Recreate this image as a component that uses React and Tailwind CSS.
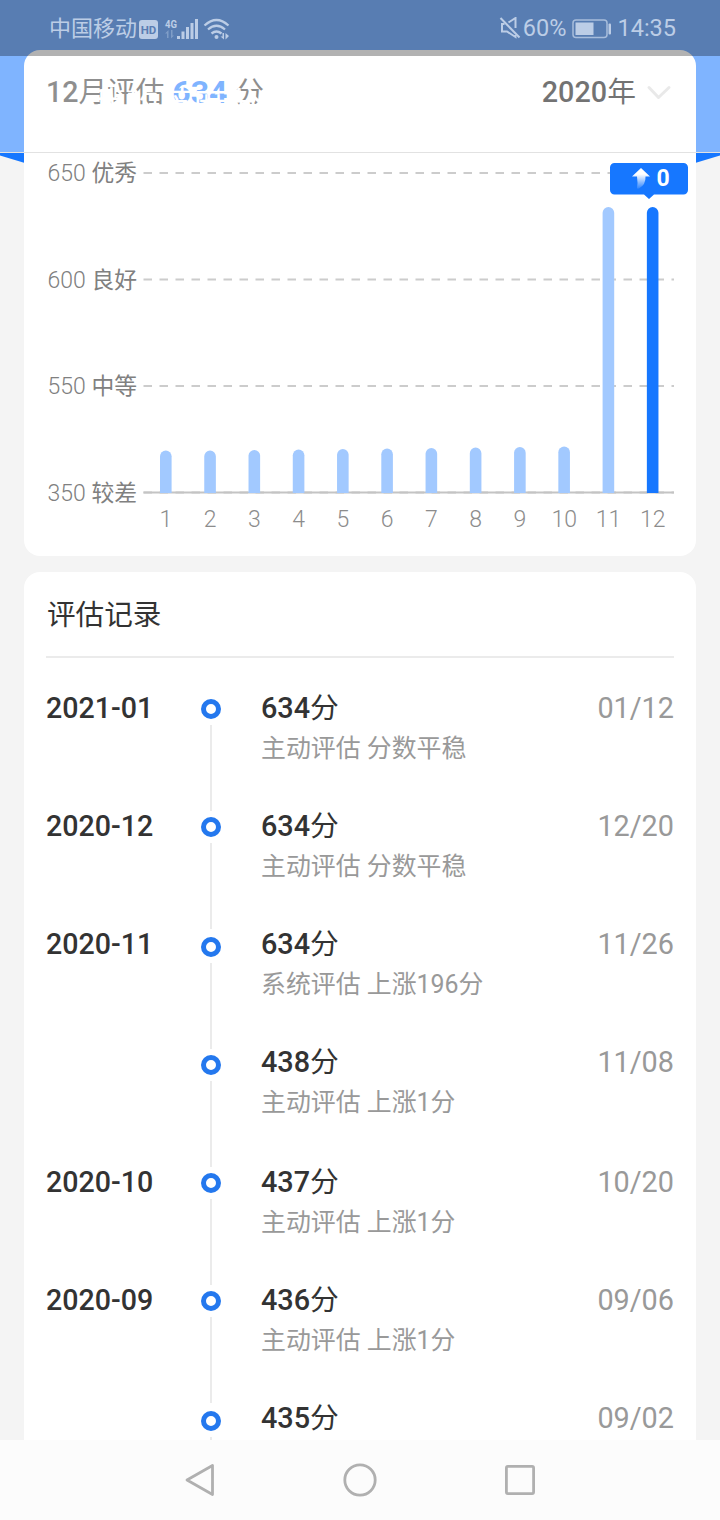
import React from "react"

const months = [
    { month: 1, top: 450.5 },
    { month: 2, top: 450.5 },
    { month: 3, top: 450 },
    { month: 4, top: 449.5 },
    { month: 5, top: 449 },
    { month: 6, top: 448.5 },
    { month: 7, top: 448 },
    { month: 8, top: 447.5 },
    { month: 9, top: 447 },
    { month: 10, top: 446.5 },
    { month: 11, top: 207 },
    { month: 12, top: 207 },
]

const levels = [
    { y: 173, score: "650", label: "优秀" },
    { y: 279.5, score: "600", label: "良好" },
    { y: 386, score: "550", label: "中等" },
    { y: 492.5, score: "350", label: "较差" },
]

const records = [
    { period: "2021-01", score: 634, note: "主动评估 分数平稳", date: "01/12", row: "h-[118px]", dot: "pt-[9px]" },
    { period: "2020-12", score: 634, note: "主动评估 分数平稳", date: "12/20", row: "h-[118px]", dot: "pt-[9px]" },
    { period: "2020-11", score: 634, note: "系统评估 上涨196分", date: "11/26", row: "h-[118px]", dot: "pt-[11px]" },
    { period: "", score: 438, note: "主动评估 上涨1分", date: "11/08", row: "h-[120px]", dot: "pt-[11px]" },
    { period: "2020-10", score: 437, note: "主动评估 上涨1分", date: "10/20", row: "h-[118px]", dot: "pt-[9px]" },
    { period: "2020-09", score: 436, note: "主动评估 上涨1分", date: "09/06", row: "h-[118px]", dot: "pt-[9px]" },
    { period: "", score: 435, note: "主动评估 上涨1分", date: "09/02", row: "h-[118px]", dot: "pt-[11px]" },
]

function StatusBar() {
    return (
        <div className="flex h-14 items-center justify-between bg-black/30 pl-[49px] pr-11 text-[#bccde6]">
            <div className="flex items-center pt-0.5">
                <span className="text-[22px] leading-none">中国移动</span>
                <svg width="96" height="26" viewBox="0 0 96 26" className="ml-0.5" fill="currentColor">
                    <rect x="0" y="4" width="19" height="19" rx="3" />
                    <text x="9.5" y="18" textAnchor="middle" fontSize="11.5" fontWeight="700" fill="#5a7db3">HD</text>
                    <text x="26" y="11.5" fontSize="11.5" fontWeight="700" textLength="12" lengthAdjust="spacingAndGlyphs">4G</text>
                    <path d="M29.500 14v8h-1.500v-4.500h-2zM32 14v8.500l3-3h-1.500v-5.500z" opacity="0.4" />
                    <rect x="38" y="20" width="3" height="3" />
                    <rect x="42.500" y="15.500" width="3" height="7.500" />
                    <rect x="47" y="11" width="3" height="12" />
                    <rect x="51.500" y="7" width="3" height="16" />
                    <rect x="56" y="3" width="3" height="20" />
                    <g fill="none" stroke="currentColor" strokeWidth="2.300">
                        <path d="M65.500 9.500Q77.500-1.500 89.500 9.500" />
                        <path d="M69 13.500Q77.500 6 86 13.500" />
                        <path d="M72.500 17.500Q77.500 13.500 82.500 17.500" />
                    </g>
                    <circle cx="77.500" cy="21" r="2" />
                    <path d="M85 17v6.500l-3.500-3h2v-3.500zM86.500 17v6.500l3.500-3.500z" />
                </svg>
            </div>
            <div className="flex items-center pt-0.5">
                <svg width="23" height="24" viewBox="0 0 23 24" fill="none" stroke="currentColor" strokeWidth="2">
                    <path d="M1.500 1L20.500 20.500" />
                    <path d="M9.500 5.500L16.500 1V11M5.500 7H3V14.500H8L16.500 20V18" />
                </svg>
                <span className="ml-px text-[23.5px] leading-none">60%</span>
                <svg width="40" height="20" viewBox="0 0 40 20" className="ml-1.5">
                    <rect x="1" y="1" width="34" height="17.500" rx="3" fill="none" stroke="currentColor" strokeWidth="1.500" opacity="0.8" />
                    <rect x="3.500" y="3.500" width="18" height="12.500" fill="currentColor" />
                    <rect x="36.500" y="4.500" width="2.500" height="11" rx="1" fill="currentColor" />
                </svg>
                <span className="ml-[5px] text-[23.5px] leading-none">14:35</span>
            </div>
        </div>
    )
}

function ScoreChart() {
    return (
        <svg width="672" height="396" viewBox="24 154 672 396" className="block">
            {
                levels.map(l => (
                    <g key={l.score}>
                        <text x="47.500" y={l.y + 8} fontSize="23" fontWeight="300" fill="#808080">{l.score}</text>
                        <text x="91.500" y={l.y + 8} fontSize="22.800" fill="#808080">{l.label}</text>
                        <line x1="143.500" x2="674" y1={l.y} y2={l.y} stroke="#cccccc" strokeWidth="2" strokeDasharray="8.500 7.500" />
                    </g>
                ))
            }
            <line x1="143.500" x2="674" y1="492.500" y2="492.500" stroke="#c4c4c4" strokeWidth="2" />
            {
                months.map((m, i) => {
                    const x = 165.8 + i * 44.26
                    return (
                        <g key={m.month}>
                            <path
                                d={`M${x - 5.8} 493V${m.top + 5.8}a5.8 5.8 0 0 1 11.6 0V493z`}
                                fill={m.month === 12 ? "#1677ff" : "#a2c9ff"}
                            />
                            <text x={x} y="527" fontSize="23" fontWeight="300" textAnchor="middle" fill="#8c8c8c">{m.month}</text>
                        </g>
                    )
                })
            }
            <path d="M614.500 163h69a4.500 4.500 0 0 1 4.500 4.500v22.500a4.500 4.500 0 0 1-4.500 4.500H654l-5 4.500-5-4.500h-29.500a4.500 4.500 0 0 1-4.500-4.500v-22.500a4.500 4.500 0 0 1 4.500-4.500z" fill="#1677ff" />
            <defs>
                <linearGradient id="arrow" x1="0" y1="0" x2="0" y2="1">
                    <stop offset="0.300" stopColor="#fff" />
                    <stop offset="1" stopColor="#fff" stopOpacity="0.100" />
                </linearGradient>
            </defs>
            <path d="M641 168l9 8.500h-4.500q.5 8-6.500 12-2 .5-2-.5 1-5 0-11.500h-5z" fill="url(#arrow)" />
            <text x="656.500" y="186" fontSize="23" fontWeight="700" fill="#fff">0</text>
        </svg>
    )
}

function RecordRow({ record }) {
    return (
        <div className={`flex shrink-0 ${record.row}`}>
            <div className="w-[155px] text-[28.6px] font-medium leading-9 text-[#333]">{record.period}</div>
            <div className={`flex w-5 flex-col items-center ${record.dot}`}>
                <div className="size-5 shrink-0 rounded-full border-[5.5px] border-[#2478ee] bg-white" />
                <div className="mt-1.5 h-[86px] w-0.5 shrink-0 bg-[#ebebeb]" />
            </div>
            <div className="ml-10 flex-1">
                <div className="text-[28.8px] leading-9 text-[#333]">
                    <span className="font-medium">{record.score}</span>分
                </div>
                <div className="mt-[5px] text-[24.9px] leading-9 text-[#999]">{record.note}</div>
            </div>
            <div className="text-[28.8px] leading-9 text-[#999]">{record.date}</div>
        </div>
    )
}

function NavBar() {
    return (
        <div className="flex h-20 items-center justify-center gap-[120px] bg-[#fcfcfc]">
            <svg width="40" height="40" viewBox="0 0 40 40" fill="none" stroke="#b0b0b0" strokeWidth="2.800" strokeLinejoin="round">
                <path d="M32.500 5.500V34.500L7 20z" />
            </svg>
            <svg width="40" height="40" viewBox="0 0 40 40" fill="none" stroke="#b0b0b0" strokeWidth="2.800">
                <circle cx="20" cy="20" r="15.200" />
            </svg>
            <svg width="40" height="40" viewBox="0 0 40 40" fill="none" stroke="#b0b0b0" strokeWidth="2.800">
                <rect x="6.400" y="6.400" width="27.200" height="27.200" rx="1.500" />
            </svg>
        </div>
    )
}

function App() {
    return (
        <div className="relative h-[1520px] w-[720px] overflow-hidden bg-[#f4f4f4] font-['Roboto','Noto_Sans_CJK_SC',sans-serif]">
            <svg width="720" height="200" viewBox="0 0 720 200" className="absolute left-0 top-0">
                <path d="M0 0H720V155.500Q360 268 0 155.500z" fill="#1677ff" />
            </svg>

            <div className="relative flex h-[1440px] flex-col gap-4 overflow-hidden px-6 pt-[50px]">
                <section className="h-[506px] shrink-0 rounded-2xl bg-white">
                    <div className="flex h-[104px] items-start justify-between pl-[22px] pr-6 pt-6">
                        <div className="flex items-center text-[28.6px] leading-9 text-[#333]">
                            <span className="font-medium">12</span>
                            <span>月评估</span>
                            <span className="mx-2 text-[32px] font-bold text-[#1677ff]">634</span>
                            <span>分</span>
                        </div>
                        <div className="flex items-center text-[28.8px] leading-9 text-black">
                            <span className="font-medium">2020</span>
                            <span>年</span>
                            <svg width="26" height="18" viewBox="0 0 26 18" className="ml-2.5" fill="none" stroke="#d8d8d8" strokeWidth="3" strokeLinecap="round" strokeLinejoin="round">
                                <path d="M3 4.500L12.500 14.500L23 4.500" />
                            </svg>
                        </div>
                    </div>
                    <ScoreChart />
                </section>

                <section className="flex h-[900px] shrink-0 flex-col rounded-2xl bg-white px-[22px]">
                    <h2 className="h-[86px] shrink-0 border-b-2 border-[#ebebeb] pl-px pt-[25px] text-[28.6px] leading-9 text-[#333]">
                        评估记录
                    </h2>
                    <div className="flex flex-col pt-8">
                        {
                            records.map(r => (
                                <RecordRow key={r.date} record={r} />
                            ))
                        }
                    </div>
                </section>
            </div>

            <div className="absolute inset-x-0 top-0 h-[153px] border-b border-[#e2e2e2] bg-white/45">
                <StatusBar />
                <div className="flex h-24 items-center pl-[91px] text-[34px] leading-none text-white">
                    我的芝麻分
                </div>
            </div>
            <NavBar />
        </div>
    )
}

export default App
